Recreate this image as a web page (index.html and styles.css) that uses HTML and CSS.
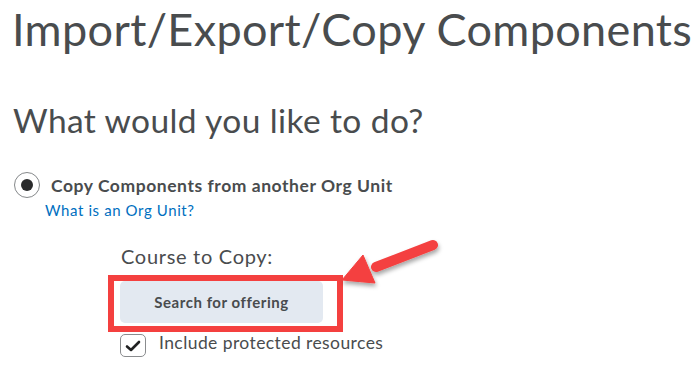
FILE: index.html
```html
<!DOCTYPE html>
<html lang="en">
<head>
  <meta charset="UTF-8">
  <title>Import/Export/Copy Components</title>
  <link rel="stylesheet" href="styles.css">
</head>
<body>
  <h1 class="page-title">Import/Export/Copy Components</h1>
  <h2 class="question">What would you like to do?</h2>

  <div class="option">
    <span class="radio"><span class="radio-dot"></span></span>
    <span class="option-label">Copy Components from another Org Unit</span>
  </div>
  <a class="help-link" href="#">What is an Org Unit?</a>

  <div class="copy-panel">
    <div class="field-label">Course to Copy:</div>
    <div class="highlight">
      <button class="search-btn">Search for offering</button>
      <svg class="arrow" width="110" height="62" viewBox="0 0 110 62">
        <defs>
          <filter id="shadow" x="-20%" y="-20%" width="140%" height="160%">
            <feDropShadow dx="1" dy="3" stdDeviation="2" flood-color="#000" flood-opacity="0.35"/>
          </filter>
        </defs>
        <g filter="url(#shadow)" fill="#f4403f" stroke="#f4403f">
          <line x1="95" y1="11" x2="38" y2="33" stroke-width="10" stroke-linecap="round"/>
          <polygon points="4,46 25,21 37,49" stroke-width="1" stroke-linejoin="round"/>
        </g>
      </svg>
    </div>
    <label class="check">
      <span class="checkbox">
        <svg width="16" height="14" viewBox="0 0 16 14"><path d="M2 7.5 L6 11 L14 3" fill="none" stroke="#202122" stroke-width="2.6" stroke-linecap="round" stroke-linejoin="round"/></svg>
      </span>
      <span class="check-text">Include protected resources</span>
    </label>
  </div>
</body>
</html>
```

FILE: styles.css
```css
body {
  margin: 0;
  padding: 0 12px;
  font-family: Lato, "Open Sans", sans-serif;
  color: #494c4e;
  background: #fff;
  overflow: hidden;
}

.page-title {
  margin: 3px 0 0;
  font-size: 45px;
  font-weight: 400;
  letter-spacing: 0.35px;
  line-height: 53px;
  white-space: nowrap;
}

.question {
  margin: 44px 0 0 1px;
  font-size: 33.5px;
  font-weight: 400;
  letter-spacing: 0.4px;
  line-height: 40px;
}

.option {
  display: flex;
  align-items: center;
  gap: 11px;
  margin-top: 32px;
  margin-left: 2px;
}

.radio {
  width: 24px;
  height: 24px;
  border: 1.2px solid #85888a;
  border-radius: 50%;
  display: flex;
  align-items: center;
  justify-content: center;
}

.radio-dot {
  width: 12px;
  height: 12px;
  border-radius: 50%;
  background: #2a2b2c;
}

.option-label {
  font-size: 17.5px;
  font-weight: 700;
  letter-spacing: 0.55px;
}

.help-link {
  display: block;
  margin: 3px 0 0 33px;
  font-size: 15px;
  letter-spacing: 0.6px;
  line-height: 18px;
  color: #006fbf;
  text-decoration: none;
}

.copy-panel {
  margin: 25px 0 0 96px;
}

.field-label {
  margin-left: 13px;
  font-size: 20px;
  letter-spacing: 0.7px;
  line-height: 24px;
}

.highlight {
  position: relative;
  width: 213px;
  margin-top: 7px;
  padding: 0 4px 3px 6px;
  border: 6px solid #f4403f;
}

.search-btn {
  display: block;
  width: 203px;
  height: 42px;
  border: 0;
  border-radius: 5px;
  background: #e3e9f1;
  font-family: Lato, "Open Sans", sans-serif;
  font-size: 15px;
  font-weight: 700;
  letter-spacing: 0.55px;
  color: #494c4e;
}

.arrow {
  position: absolute;
  left: 224px;
  top: -47px;
}

.check {
  display: flex;
  align-items: flex-start;
  gap: 13px;
  margin: 2px 0 0 12px;
}

.checkbox {
  width: 24px;
  height: 21px;
  border: 1px solid #8a8c8e;
  border-radius: 5px;
  display: flex;
  align-items: center;
  justify-content: center;
}

.check-text {
  margin-top: -2px;
  font-size: 17.5px;
  letter-spacing: 0.42px;
  line-height: 21px;
}
```
